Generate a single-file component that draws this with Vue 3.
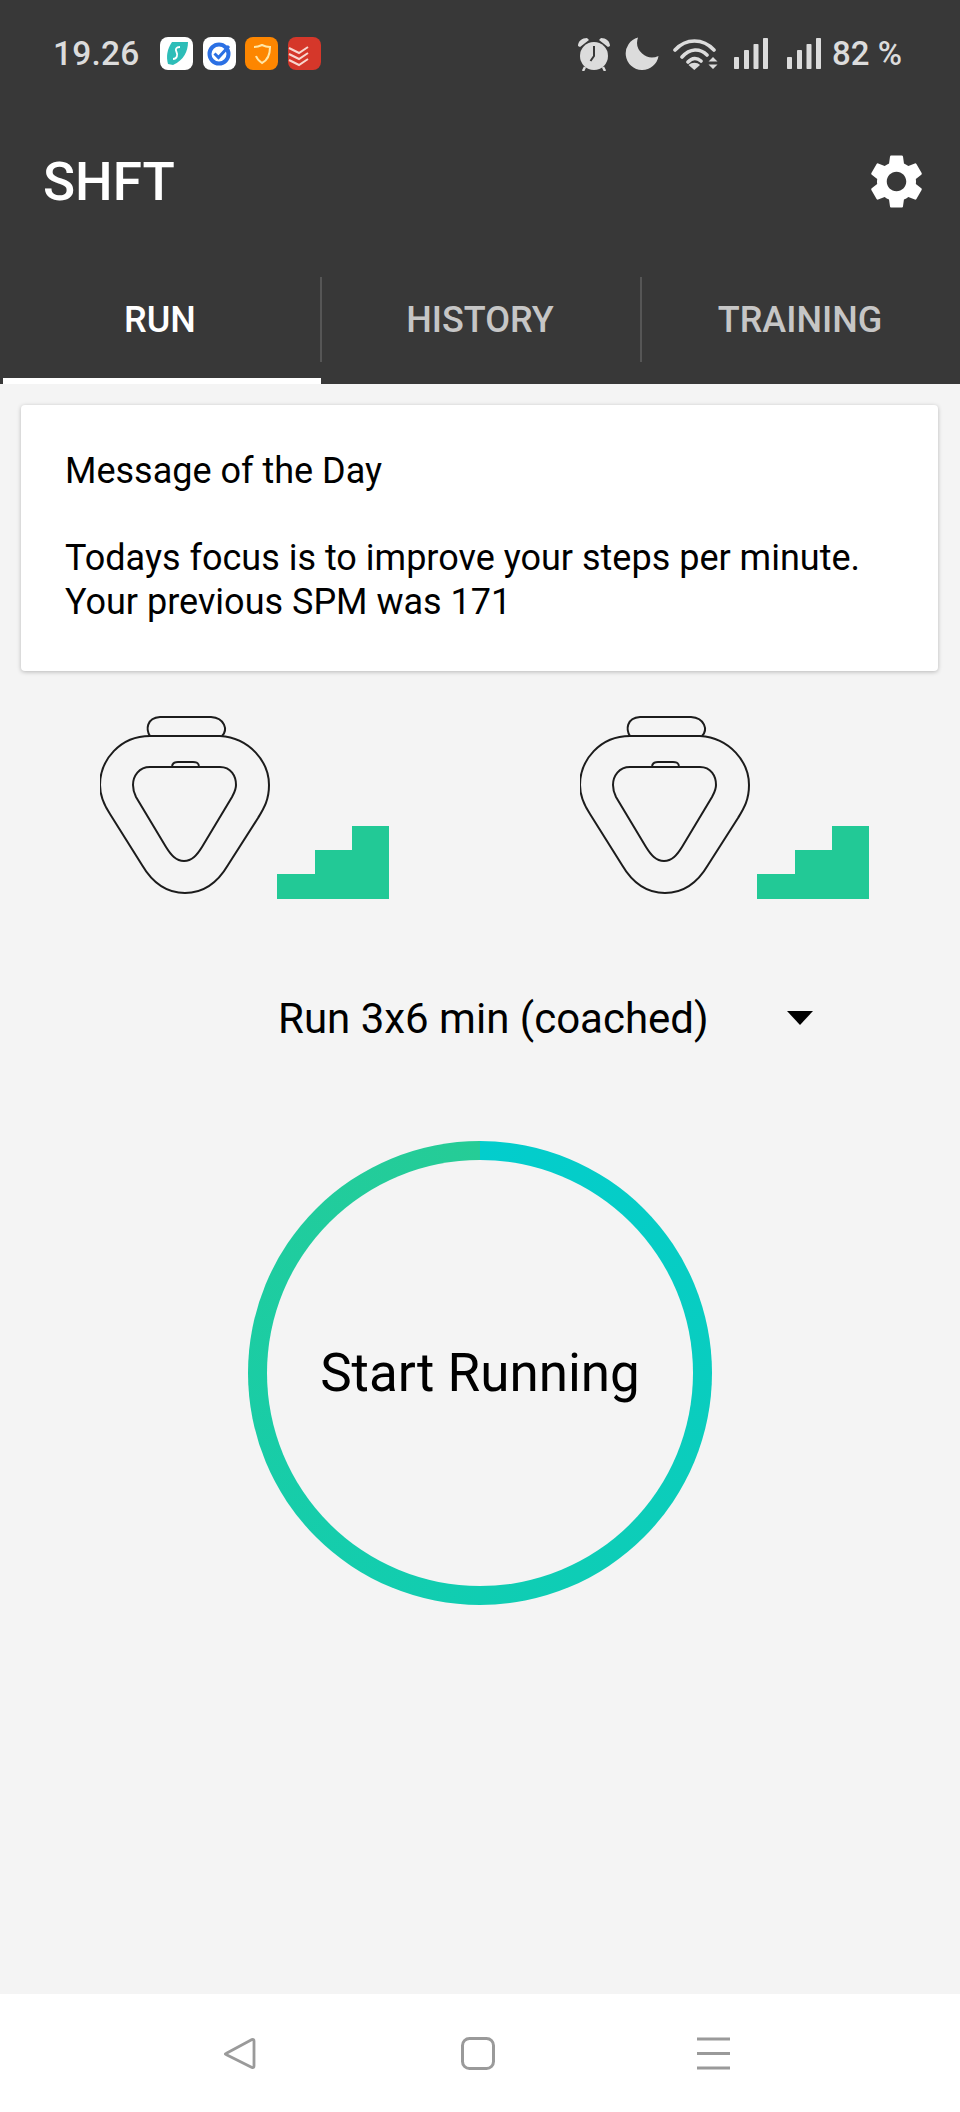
<script setup>
const tabs = [
  { label: 'RUN', active: true },
  { label: 'HISTORY', active: false },
  { label: 'TRAINING', active: false }
]
const bars = [
  { x: 0, y: 19, h: 12 },
  { x: 10, y: 12, h: 19 },
  { x: 19.5, y: 6, h: 25 },
  { x: 29, y: 0, h: 31 }
]
</script>

<template>
  <div class="phone">
    <header class="top">
      <div class="status">
        <span class="time">19.26</span>
        <div class="apps">
          <svg class="app" viewBox="0 0 33 33">
            <rect width="33" height="33" rx="8" fill="#fff" />
            <path d="M12 5H28C28 14 24 23 13 28L8 27C6 20 7 12 12 5Z" fill="#2dbdb8" />
            <path d="M20 10C16 10 15 12 16.500 15S17 22 13 22" fill="none" stroke="#fff" stroke-width="1.800" />
          </svg>
          <svg class="app" viewBox="0 0 33 33">
            <rect width="33" height="33" rx="8" fill="#fff" />
            <circle cx="16" cy="17" r="9.500" fill="none" stroke="#2b70e4" stroke-width="4" />
            <path d="M11.500 16.500L15.500 20.500L26 9" fill="none" stroke="#2b70e4" stroke-width="3" />
          </svg>
          <svg class="app" viewBox="0 0 33 33">
            <rect width="33" height="33" rx="8" fill="#fd8600" />
            <path d="M9 10C13 10 15 9 17 8C19 9 21 10 25 10C25 18 23 23 17 26C14 24 12 22 11 19" fill="none" stroke="#ffe7a6" stroke-width="2" />
          </svg>
          <svg class="app" viewBox="0 0 33 33">
            <rect width="33" height="33" rx="8" fill="#d5372a" />
            <path d="M1 11L11 16L20 10M1 17L11 22L20 16M1 23L11 28L20 22" fill="none" stroke="#f8d7cf" stroke-width="2" />
          </svg>
        </div>
        <div class="system">
          <svg class="alarm" viewBox="0 0 34 34">
            <circle cx="17" cy="19" r="14" fill="#dcdcdc" />
            <path d="M17 9V19L13.500 24" fill="none" stroke="#383838" stroke-width="2" />
            <path d="M1 9C1 4 5 1 10 1L12 3L3 10ZM33 9C33 4 29 1 24 1L22 3L31 10Z" fill="#dcdcdc" />
            <path d="M8 30L6 34M26 30L28 34" stroke="#dcdcdc" stroke-width="2.500" />
          </svg>
          <svg class="moon" viewBox="0 0 34 34">
            <path d="M13 .5A16.500 16.500 0 1 0 33.500 19A15 15 0 0 1 13 .5Z" fill="#dcdcdc" />
          </svg>
          <svg class="wifi" viewBox="0 0 46 33">
            <path d="M2 13C13 1 30 1 41 13M9 20C17 11 27 11 34 18M15 25C19 20.500 24 20.500 28 24" fill="none" stroke="#dcdcdc" stroke-width="3.600" stroke-linecap="round" />
            <path d="M15.500 28C19 25 24 25 27 28L21.300 33Z" fill="#dcdcdc" />
            <path d="M40 20L44.500 24.500H35.500ZM35.500 27.500H44.500L40 32Z" fill="#dcdcdc" />
          </svg>
          <svg v-for="n in 2" :key="n" class="signal" viewBox="0 0 35 31">
            <rect v-for="b in bars" :key="b.x" :x="b.x" :y="b.y" width="5" :height="b.h" fill="#dcdcdc" rx=".8" />
          </svg>
          <span class="battery">82 %</span>
        </div>
      </div>

      <div class="toolbar">
        <h1 class="title">SHFT</h1>
        <svg class="gear" viewBox="0 0 24 24">
          <path fill="#fff" d="M19.140 12.940c.04-.3.06-.61.06-.94 0-.32-.02-.64-.07-.94l2.030-1.580a.49.49 0 0 0 .12-.61l-1.920-3.320a.488.488 0 0 0-.59-.22l-2.390.96c-.5-.38-1.030-.7-1.620-.94l-.36-2.540a.484.484 0 0 0-.48-.41h-3.840c-.24 0-.43.17-.47.41l-.36 2.540c-.59.24-1.130.57-1.620.94l-2.390-.96c-.22-.08-.47 0-.59.22L2.740 8.870c-.12.21-.08.47.12.61l2.030 1.580c-.05.3-.09.63-.09.94s.02.64.07.94l-2.030 1.580a.49.49 0 0 0-.12.61l1.920 3.320c.12.22.37.29.59.22l2.390-.96c.5.38 1.030.7 1.620.94l.36 2.540c.05.24.24.41.48.41h3.840c.24 0 .44-.17.47-.41l.36-2.540c.59-.24 1.130-.56 1.620-.94l2.390.96c.22.08.47 0 .59-.22l1.920-3.320c.12-.22.07-.47-.12-.61l-2.010-1.580zM12 15.600c-1.980 0-3.600-1.620-3.600-3.600s1.620-3.600 3.600-3.600 3.600 1.620 3.600 3.600-1.620 3.600-3.600 3.600z" />
        </svg>
      </div>

      <nav class="tabs">
        <div v-for="t in tabs" :key="t.label" class="tab" :class="{ active: t.active }">
          <span class="label">{{ t.label }}</span>
        </div>
      </nav>
    </header>

    <main class="content">
      <section class="card">
        <p>Message of the Day</p>
        <p class="gap">Todays focus is to improve your steps per minute.<br />Your previous SPM was 171</p>
      </section>

      <div class="devices">
        <div v-for="n in 2" :key="n" class="device">
          <svg class="pod" viewBox="100 715 290 186">
            <g fill="none" stroke="#1c1c1c" stroke-width="2">
              <path d="M150 736H220C250 738 269 762 269 785C269 800 264 808 258 818L228 865C218 882 204 893 185 893C166 893 152 882 142 865L110 814C104 805 100 796 100 785C100 760 120 736 150 736Z" />
              <path d="M150 736C146 730 146 718 160 717H211C225 718 228 730 222 736" />
              <path d="M150 767H220C231 767 236 776 236 785C236 790 234 793 232 797L202 847C197 855 192 861 184 861C176 861 171 855 166 847L136 797C134 793 133 790 133 785C133 776 139 767 150 767Z" />
              <path d="M172 767C172 763 175 762 178 762H193C197 762 199 763 199 767" />
            </g>
            <path d="M277 899V874H315V850H352V826H389V899Z" fill="#22c996" />
          </svg>
        </div>
      </div>

      <div class="picker">
        <span class="picker-text">Run 3x6 min (coached)</span>
        <span class="caret"></span>
      </div>

      <div class="ring-wrap">
        <div class="ring">
          <div class="ring-inner">Start Running</div>
        </div>
      </div>
    </main>

    <footer class="nav">
      <svg class="nav-back" viewBox="0 0 33 33">
        <path d="M3 16.500L29 2.500Q31 1.800 31 4V29Q31 31.200 29 30.500L3 17.500Q1.500 17 3 16.500Z" fill="none" stroke="#9a9a9a" stroke-width="2.800" stroke-linejoin="round" />
      </svg>
      <svg class="nav-home" viewBox="0 0 34 33">
        <rect x="1.500" y="1.500" width="31" height="30" rx="7" fill="none" stroke="#9a9a9a" stroke-width="3" />
      </svg>
      <svg class="nav-menu" viewBox="0 0 33 33">
        <path d="M0 2H33M0 16.500H33M0 31H33" stroke="#9a9a9a" stroke-width="3" />
      </svg>
    </footer>
  </div>
</template>

<style scoped>
.phone {
  width: 960px;
  height: 2112px;
  display: flex;
  flex-direction: column;
  background: #f4f4f4;
  font-family: Roboto, "Liberation Sans", sans-serif;
  color: #000;
  overflow: hidden;
}
.top {
  background: #383838;
  height: 384px;
  flex: none;
}
.status {
  height: 107px;
  display: flex;
  align-items: center;
  padding: 0 58px 0 53px;
  color: #dcdcdc;
  font-weight: 500;
  box-sizing: border-box;
}
.time {
  font-size: 33.500px;
  width: 86px;
  letter-spacing: 0.2px;
}
.apps {
  display: flex;
  gap: 9.700px;
  margin-left: 21px;
}
.app {
  width: 33px;
  height: 33px;
  display: block;
}
.system {
  display: flex;
  align-items: center;
  margin-left: auto;
}
.alarm {
  width: 34px;
  height: 34px;
}
.moon {
  width: 34px;
  height: 34px;
  margin-left: 14px;
}
.wifi {
  width: 46px;
  height: 33px;
  margin-left: 14px;
}
.signal {
  width: 35px;
  height: 31px;
  margin-left: 15px;
}
.signal + .signal {
  margin-left: 18px;
}
.battery {
  font-size: 33px;
  margin-left: 10px;
  white-space: nowrap;
}
.toolbar {
  height: 149px;
  display: flex;
  align-items: center;
  justify-content: space-between;
  padding: 0 31px 0 43px;
}
.title {
  margin: 0;
  font-size: 53px;
  font-weight: 500;
  color: #fff;
}
.gear {
  width: 65px;
  height: 65px;
  display: block;
}
.tabs {
  height: 128px;
  display: grid;
  grid-template-columns: repeat(3, 1fr);
}
.tab {
  display: flex;
  align-items: center;
  justify-content: center;
  position: relative;
  color: #c6c6c6;
  font-size: 36px;
  font-weight: 500;
}
.tab:not(:last-child)::after {
  content: "";
  position: absolute;
  right: -2px;
  top: 21px;
  width: 2px;
  height: 85px;
  background: #565656;
}
.tab.active {
  color: #fff;
}
.tab.active::before {
  content: "";
  position: absolute;
  left: 3px;
  right: -1px;
  bottom: 0;
  height: 6px;
  background: #fff;
}
.content {
  flex: 1;
  display: flex;
  flex-direction: column;
  padding-top: 21px;
}
.card {
  margin: 0 22px 0 21px;
  height: 266px;
  box-sizing: border-box;
  padding: 44px 43px 0 44px;
  background: #fff;
  border-radius: 4px;
  box-shadow: 0 1px 4px rgba(0, 0, 0, 0.25);
  font-size: 36px;
  line-height: 44px;
}
.card p {
  margin: 0;
}
.card p.gap {
  margin-top: 43px;
}
.devices {
  display: grid;
  grid-template-columns: 1fr 1fr;
  margin-top: 44px;
}
.device {
  padding-left: 100px;
}
.pod {
  width: 290px;
  height: 186px;
  display: block;
}
.picker {
  display: flex;
  align-items: center;
  height: 72px;
  margin-top: 81px;
  padding-left: 278px;
  font-size: 42px;
}
.picker-text {
  width: 509px;
  white-space: nowrap;
}
.caret {
  width: 0;
  height: 0;
  border-left: 13px solid transparent;
  border-right: 13px solid transparent;
  border-top: 14px solid #000;
}
.ring-wrap {
  display: flex;
  justify-content: center;
  margin-top: 87px;
}
.ring {
  width: 464px;
  height: 464px;
  box-sizing: border-box;
  padding: 19px;
  border-radius: 50%;
  background: conic-gradient(#02cdcd 0deg, #10cdb2 180deg, #26cc96 360deg);
  display: flex;
}
.ring-inner {
  flex: 1;
  border-radius: 50%;
  background: #f4f4f4;
  display: flex;
  align-items: center;
  justify-content: center;
  font-size: 53px;
}
.nav {
  height: 118px;
  flex: none;
  background: #fff;
  display: flex;
  align-items: flex-start;
  padding: 43px 0 0 223px;
  box-sizing: border-box;
}
.nav-back {
  width: 33px;
  height: 33px;
}
.nav-home {
  width: 34px;
  height: 33px;
  margin-left: 205px;
}
.nav-menu {
  width: 33px;
  height: 33px;
  margin-left: 202px;
}
</style>
